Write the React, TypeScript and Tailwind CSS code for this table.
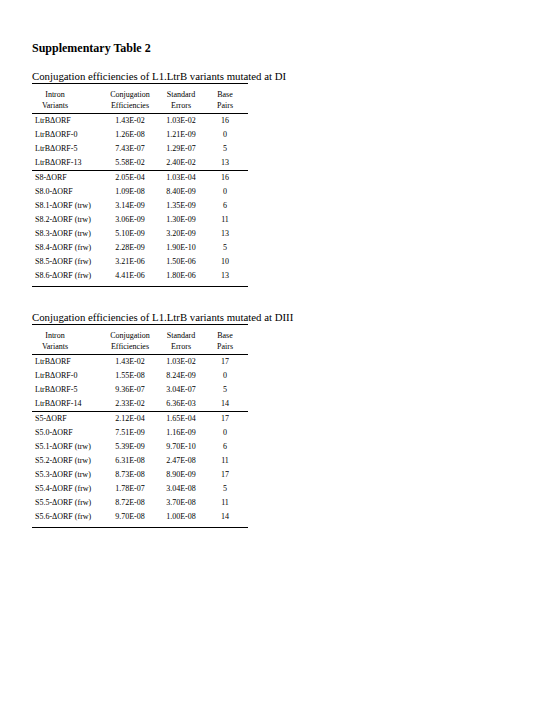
import React from 'react';

type Row = [string, string, string, string];

interface TableData {
  heading: string;
  controls: Row[];
  mutants: Row[];
}

const tables: TableData[] = [
  {
    heading: 'Conjugation efficiencies of L1.LtrB variants mutated at DI',
    controls: [
      ['LtrBΔORF', '1.43E-02', '1.03E-02', '16'],
      ['LtrBΔORF-0', '1.26E-08', '1.21E-09', '0'],
      ['LtrBΔORF-5', '7.43E-07', '1.29E-07', '5'],
      ['LtrBΔORF-13', '5.58E-02', '2.40E-02', '13'],
    ],
    mutants: [
      ['S8-ΔORF', '2.05E-04', '1.03E-04', '16'],
      ['S8.0-ΔORF', '1.09E-08', '8.40E-09', '0'],
      ['S8.1-ΔORF (trw)', '3.14E-09', '1.35E-09', '6'],
      ['S8.2-ΔORF (trw)', '3.06E-09', '1.30E-09', '11'],
      ['S8.3-ΔORF (trw)', '5.10E-09', '3.20E-09', '13'],
      ['S8.4-ΔORF (frw)', '2.28E-09', '1.90E-10', '5'],
      ['S8.5-ΔORF (frw)', '3.21E-06', '1.50E-06', '10'],
      ['S8.6-ΔORF (frw)', '4.41E-06', '1.80E-06', '13'],
    ],
  },
  {
    heading: 'Conjugation efficiencies of L1.LtrB variants mutated at DIII',
    controls: [
      ['LtrBΔORF', '1.43E-02', '1.03E-02', '17'],
      ['LtrBΔORF-0', '1.55E-08', '8.24E-09', '0'],
      ['LtrBΔORF-5', '9.36E-07', '3.04E-07', '5'],
      ['LtrBΔORF-14', '2.33E-02', '6.36E-03', '14'],
    ],
    mutants: [
      ['S5-ΔORF', '2.12E-04', '1.65E-04', '17'],
      ['S5.0-ΔORF', '7.51E-09', '1.16E-09', '0'],
      ['S5.1-ΔORF (trw)', '5.39E-09', '9.70E-10', '6'],
      ['S5.2-ΔORF (trw)', '6.31E-08', '2.47E-08', '11'],
      ['S5.3-ΔORF (trw)', '8.73E-08', '8.90E-09', '17'],
      ['S5.4-ΔORF (frw)', '1.78E-07', '3.04E-08', '5'],
      ['S5.5-ΔORF (frw)', '8.72E-08', '3.70E-08', '11'],
      ['S5.6-ΔORF (frw)', '9.70E-08', '1.00E-08', '14'],
    ],
  },
];

const gridCols = 'grid grid-cols-[76px_44px_58px_30px_8px]';

const DataRow: React.FC<{ row: Row }> = ({ row }) => (
  <div className={`${gridCols} h-[14px] items-center leading-[14px]`}>
    <span className="pl-[3px] whitespace-nowrap">{row[0]}</span>
    <span className="text-center whitespace-nowrap">{row[1]}</span>
    <span className="text-center whitespace-nowrap">{row[2]}</span>
    <span className="text-center">{row[3]}</span>
    <span />
  </div>
);

const EfficiencyTable: React.FC<{ data: TableData }> = ({ data }) => (
  <div className="flex flex-col">
    <div className="h-[14px] leading-[14px] text-[10.8px] whitespace-nowrap">{data.heading}</div>
    <div className="w-[216px] border-t border-black text-[8px] text-black">
      <div className={`${gridCols} border-b border-black pt-[5px] pb-[2px] leading-[11px]`}>
        <div className="w-[46px] text-center">
          Intron
          <br />
          Variants
        </div>
        <div className="text-center whitespace-nowrap">
          Conjugation
          <br />
          Efficiencies
        </div>
        <div className="text-center">
          Standard
          <br />
          Errors
        </div>
        <div className="text-center">
          Base
          <br />
          Pairs
        </div>
        <div />
      </div>
      <div className="border-b border-black">
        {data.controls.map((r) => (
          <DataRow key={r[0]} row={r} />
        ))}
      </div>
      <div className="border-b border-black pb-[3px]">
        {data.mutants.map((r) => (
          <DataRow key={r[0]} row={r} />
        ))}
      </div>
    </div>
  </div>
);

export default function App() {
  return (
    <div className="min-h-[720px] w-[540px] bg-white pl-[32px] pt-[41px] text-black font-['Liberation_Serif','Times_New_Roman',serif]">
      <div className="h-[14px] leading-[14px] text-[12px] font-bold">Supplementary Table 2</div>
      <div className="mt-[14px]">
        <EfficiencyTable data={tables[0]} />
      </div>
      <div className="mt-[23px]">
        <EfficiencyTable data={tables[1]} />
      </div>
    </div>
  );
}
